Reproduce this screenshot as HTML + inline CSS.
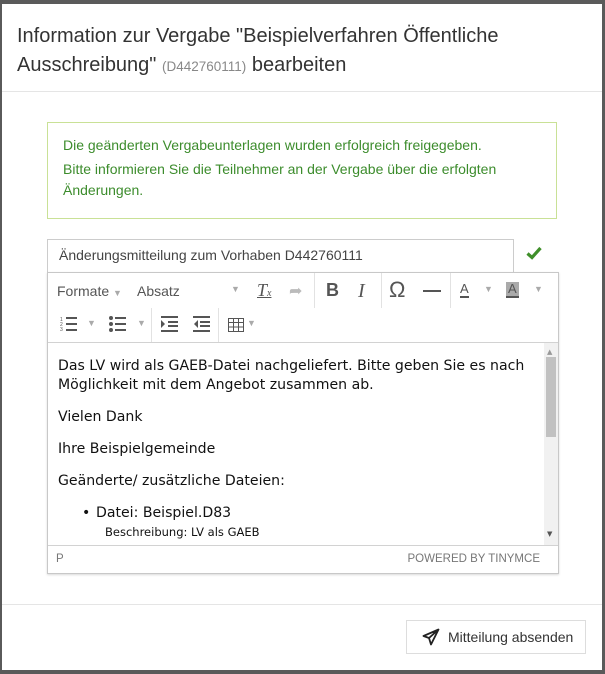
<!DOCTYPE html>
<html><head><meta charset="utf-8"><style>
*{box-sizing:border-box;margin:0;padding:0}
body{width:605px;height:674px;background:#5a5a5a;position:relative;overflow:hidden;font-family:"Liberation Sans",Arial,sans-serif}
#dlg{position:absolute;left:2px;top:4px;width:600px;height:666px;background:#fff}
.abs{position:absolute}
h1{position:absolute;left:15px;top:18px;font-size:20px;font-weight:normal;color:#333;line-height:29px;width:560px}
h1 small{font-size:13.5px;color:#888}
.hr{position:absolute;left:0;width:600px;height:1px;background:#e5e5e5}
.alert{left:45px;top:118px;width:510px;height:97px;border:1px solid #c9e196;color:#3c8c2c;font-size:14px;line-height:21px;padding:12px 15px}
.alert p{margin-bottom:3px}
.inp{left:45px;top:235px;width:467px;height:34px;border:1px solid #ccc;font-size:14px;color:#444;padding:7px 11px}
.ed{left:45px;top:268px;width:512px;height:302px;border:1px solid #c8c8c8;box-shadow:0 1px 2px rgba(0,0,0,.15)}
.tb{position:absolute;left:0;width:510px;background:#fff;color:#555;font-size:14px}
.g{position:absolute;color:#555}
.sep{position:absolute;width:1px;background:#e2e2e2}
.cnt{position:absolute;left:0;top:69px;width:510px;height:203px;border-top:1px solid #d2d2d2;font-family:"DejaVu Sans",Verdana,sans-serif;font-size:14.1px;color:#111;padding:14px 10px;line-height:19px;overflow:hidden}
.cnt p{margin-bottom:13px}
.sb{position:absolute;left:0;top:272px;width:510px;height:28px;border-top:1px solid #d2d2d2;font-size:11.5px;color:#777;padding:7px 8px}
.btn{left:404px;top:616px;width:180px;height:34px;border:1px solid #ddd;font-size:14px;color:#333;padding:8px 0 0 41px}
</style></head><body>
<div id="dlg">
<h1>Information zur Vergabe "Beispielverfahren Öffentliche Ausschreibung" <small>(D442760111)</small> bearbeiten</h1>
<div class="hr" style="top:87px"></div>
<div class="abs alert"><p>Die geänderten Vergabeunterlagen wurden erfolgreich freigegeben.</p><p>Bitte informieren Sie die Teilnehmer an der Vergabe über die erfolgten Änderungen.</p></div>
<div class="abs inp">Änderungsmitteilung zum Vorhaben D442760111</div>
<svg class="abs" style="left:524px;top:242px" width="16" height="14" viewBox="0 0 16 14"><path d="M1.5 7.5 L6 11.5 L14.5 2" stroke="#3f8f2a" stroke-width="3.2" fill="none"/></svg>
<div class="abs ed">
 <div class="tb" style="top:0;height:35px">
  <span class="g" style="left:9px;top:10px">Formate <span style="font-size:9px;color:#aaa">▼</span></span>
  <span class="g" style="left:89px;top:10px">Absatz</span>
  <span class="g" style="left:183px;top:11px;font-size:9px;color:#aaa">▼</span>
  <span class="g" style="left:209px;top:7px;font-family:'Liberation Serif',serif;font-style:italic;font-size:18px;text-decoration:underline">T<span style="font-size:10px">x</span></span>
  <span class="g" style="left:241px;top:8px;color:#bbb;font-size:16px">➦</span>
  <div class="sep" style="left:266px;top:0;height:35px"></div>
  <span class="g" style="left:278px;top:7px;font-weight:bold;font-size:18px">B</span>
  <span class="g" style="left:310px;top:7px;font-family:'Liberation Serif',serif;font-style:italic;font-size:20px">I</span>
  <div class="sep" style="left:333px;top:0;height:35px"></div>
  <span class="g" style="left:341px;top:4px;font-size:22px">Ω</span>
  <div class="abs" style="left:375px;top:17px;width:18px;height:2px;background:#555"></div>
  <div class="sep" style="left:402px;top:0;height:35px"></div>
  <span class="g" style="left:412px;top:9px;font-size:13px;border-bottom:2px solid #555;line-height:14px">A</span>
  <span class="g" style="left:436px;top:11px;font-size:9px;color:#aaa">▼</span>
  <span class="g" style="left:458px;top:9px;font-size:13px;background:#aaa;border-bottom:2px solid #555;line-height:14px;padding:0 2px">A</span>
  <span class="g" style="left:486px;top:11px;font-size:9px;color:#aaa">▼</span>
 </div>
 <div class="tb" style="top:35px;height:34px">
  <svg class="abs" style="left:12px;top:8px" width="18" height="16"><g stroke="#555" stroke-width="2"><line x1="6" y1="2" x2="17" y2="2"/><line x1="6" y1="8" x2="17" y2="8"/><line x1="6" y1="14" x2="17" y2="14"/></g><g fill="#555" font-size="5" font-family="Liberation Sans"><text x="0" y="5">1</text><text x="0" y="10">2</text><text x="0" y="15">3</text></g></svg>
  <span class="g" style="left:39px;top:10px;font-size:9px;color:#aaa">▼</span>
  <svg class="abs" style="left:61px;top:8px" width="18" height="16"><g stroke="#555" stroke-width="2"><line x1="6" y1="2" x2="17" y2="2"/><line x1="6" y1="8" x2="17" y2="8"/><line x1="6" y1="14" x2="17" y2="14"/></g><g fill="#555"><circle cx="2" cy="2" r="2"/><circle cx="2" cy="8" r="2"/><circle cx="2" cy="14" r="2"/></g></svg>
  <span class="g" style="left:89px;top:10px;font-size:9px;color:#aaa">▼</span>
  <div class="sep" style="left:103px;top:0;height:34px"></div>
  <svg class="abs" style="left:113px;top:8px" width="17" height="16"><g stroke="#555" stroke-width="2"><line x1="0" y1="1" x2="17" y2="1"/><line x1="7" y1="6" x2="17" y2="6"/><line x1="7" y1="10" x2="17" y2="10"/><line x1="0" y1="15" x2="17" y2="15"/></g><path d="M0 4 L4 8 L0 12Z" fill="#555"/></svg>
  <svg class="abs" style="left:145px;top:8px" width="17" height="16"><g stroke="#555" stroke-width="2"><line x1="0" y1="1" x2="17" y2="1"/><line x1="7" y1="6" x2="17" y2="6"/><line x1="7" y1="10" x2="17" y2="10"/><line x1="0" y1="15" x2="17" y2="15"/></g><path d="M5 4 L1 8 L5 12Z" fill="#555"/></svg>
  <div class="sep" style="left:170px;top:0;height:34px"></div>
  <svg class="abs" style="left:180px;top:10px" width="16" height="14"><rect x="0.5" y="0.5" width="15" height="13" fill="none" stroke="#555"/><g stroke="#555"><line x1="0" y1="4.5" x2="16" y2="4.5"/><line x1="0" y1="9" x2="16" y2="9"/><line x1="5.5" y1="0" x2="5.5" y2="14"/><line x1="10.5" y1="0" x2="10.5" y2="14"/></g></svg>
  <span class="g" style="left:199px;top:10px;font-size:9px;color:#aaa">▼</span>
 </div>
 <div class="cnt">
  <p>Das LV wird als GAEB-Datei nachgeliefert. Bitte geben Sie es nach Möglichkeit mit dem Angebot zusammen ab.</p>
  <p>Vielen Dank</p>
  <p>Ihre Beispielgemeinde</p>
  <p>Geänderte/ zusätzliche Dateien:</p>
  <div style="padding-left:38px;position:relative"><span style="position:absolute;left:24px">•</span>Datei: Beispiel.D83<br><span style="font-size:11.5px;padding-left:9px">Beschreibung: LV als GAEB</span><br><span style="font-size:11.5px;padding-left:9px">Geändert am: 15.02.2021 14:23</span></div>
  <div style="position:absolute;right:0;top:0;width:14px;height:203px;background:#f1f1f1"><div style="position:absolute;left:2px;top:14px;width:10px;height:80px;background:#c1c1c1"></div><span style="position:absolute;left:3px;top:0;font-size:7px;color:#999">▲</span><span style="position:absolute;left:3px;bottom:2px;font-size:7px;color:#555">▼</span></div>
 </div>
 <div class="sb">P<span style="position:absolute;right:18px;top:7px">POWERED BY TINYMCE</span></div>
</div>
<div class="hr" style="top:600px"></div>
<div class="abs btn">Mitteilung absenden</div>
<svg class="abs" style="left:420px;top:624px" width="18" height="18" viewBox="0 0 18 18"><path d="M16.5 1.5 L1.5 8 L7 10 L9 16.5 Z M7 10 L16.5 1.5" fill="none" stroke="#222" stroke-width="1.8" stroke-linejoin="round"/></svg>
</div>
</body></html>
